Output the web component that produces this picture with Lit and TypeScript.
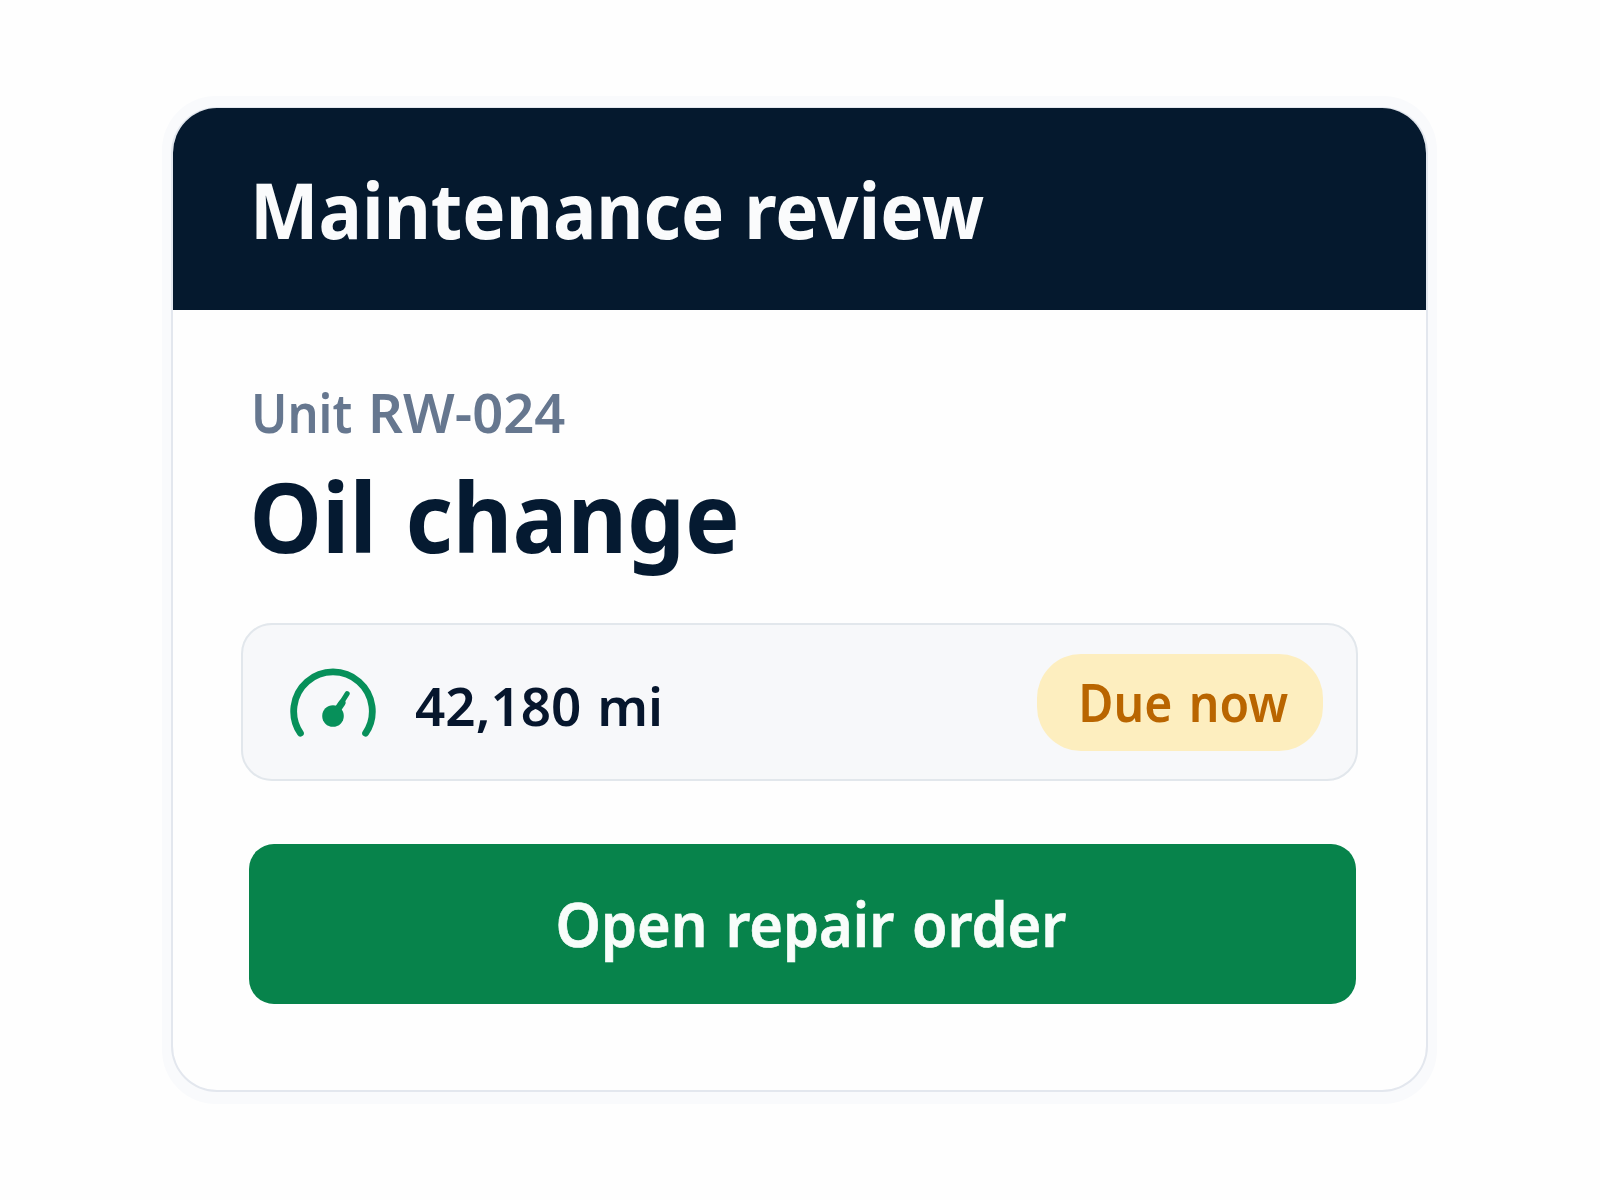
import { LitElement, html, css } from "lit";
import { customElement, property } from "lit/decorators.js";

@customElement("gauge-icon")
class GaugeIcon extends LitElement {
  static styles = css`
    :host { display: block; width: 88px; height: 72px; flex: none; }
    svg { display: block; width: 100%; height: 100%; }
  `;

  render() {
    return html`
      <svg viewBox="0 0 88 72" fill="none" stroke="#07905a" stroke-linecap="round" aria-hidden="true">
        <path d="M11.4 66.2A39.3 39.3 0 1 1 76.6 66.2" stroke-width="6.8" />
        <path d="M44 49L58.2 26.7" stroke-width="5" />
        <path d="M44 49L53 36" stroke-width="7" />
        <circle cx="44" cy="49" r="10.8" fill="#07905a" stroke="none" />
      </svg>
    `;
  }
}

@customElement("maintenance-card")
class MaintenanceCard extends LitElement {
  @property() heading = "";
  @property() unit = "";
  @property() service = "";
  @property() mileage = "";
  @property() status = "";
  @property() action = "";

  static styles = css`
    :host { display: block; font-family: "Noto Sans", "Open Sans", sans-serif; }
    .halo {
      box-sizing: border-box;
      width: 1275px;
      height: 1008px;
      padding: 11px 9px 12px;
      border-radius: 54px;
      background: #f9fafc;
    }
    .card {
      box-sizing: border-box;
      height: 985px;
      border: 2px solid #e3e7ee;
      border-top: 1px solid #e3e7ee;
      border-radius: 46px;
      background: #fefefe;
      overflow: hidden;
    }
    h1, h2, p { margin: 0; white-space: nowrap; }
    .header {
      display: flex;
      align-items: center;
      box-sizing: border-box;
      height: 202px;
      padding: 1px 0 0 76.5px;
      background: #05192e;
    }
    h1 {
      font-size: 76.5px;
      line-height: 1;
      font-weight: 700;
      word-spacing: 1px;
      color: #fafbfc;
      transform: scaleX(0.949);
      transform-origin: left;
    }
    .body { padding: 71px 68px 0 67.5px; }
    .unit {
      display: flex;
      gap: 9.5px;
      padding-left: 10px;
      font-size: 53.5px;
      line-height: 64px;
      font-weight: 600;
      color: #66778f;
    }
    .unit-label { transform: scaleX(0.912); transform-origin: left; }
    .unit-code { transform: scaleX(1.015); transform-origin: right; }
    h2 {
      margin-top: 15px;
      padding-left: 8.5px;
      font-size: 97px;
      line-height: 110px;
      font-weight: 700;
      word-spacing: 5px;
      color: #051a31;
      transform: scaleX(0.946);
      transform-origin: 8.5px 50%;
    }
    .reading {
      display: flex;
      align-items: center;
      box-sizing: border-box;
      height: 158px;
      margin-top: 53px;
      padding: 0 33px 0 46.5px;
      border: 2px solid #e2e7ec;
      border-radius: 31px;
      background: #f7f8fa;
    }
    gauge-icon { margin-top: 2px; }
    .mileage {
      margin-left: 38px;
      padding-top: 7.5px;
      font-size: 53px;
      line-height: 64px;
      font-weight: 600;
      word-spacing: 2px;
      color: #06162d;
    }
    .status {
      display: grid;
      place-items: center;
      box-sizing: border-box;
      width: 286px;
      height: 97px;
      margin-left: auto;
      padding: 2px 0 0 6px;
      border-radius: 44px;
      background: #fdeebf;
      font-size: 51.5px;
      line-height: 1;
      font-weight: 600;
      white-space: nowrap;
      word-spacing: 4px;
      color: #b96500;
    }
    .status-text { transform: scaleX(0.935); }
    .action {
      display: flex;
      align-items: center;
      justify-content: center;
      box-sizing: border-box;
      width: 1107px;
      height: 160px;
      margin: 63px 0 0 8px;
      padding: 0 0 0 17px;
      border: 0;
      border-radius: 25px;
      background: #07834b;
      font-family: inherit;
      font-size: 60.5px;
      line-height: 1;
      font-weight: 600;
      word-spacing: 3px;
      color: #f8fdfa;
      -webkit-text-stroke: 0.7px #f8fdfa;
    }
    .action-text { transform: scaleX(0.953); }
  `;

  render() {
    const [label, code] = this.unit.split(" ");
    return html`
      <div class="halo">
        <article class="card">
          <header class="header"><h1>${this.heading}</h1></header>
          <div class="body">
            <p class="unit"><span class="unit-label">${label}</span> <span class="unit-code">${code}</span></p>
            <h2>${this.service}</h2>
            <div class="reading">
              <gauge-icon></gauge-icon>
              <p class="mileage">${this.mileage}</p>
              <span class="status"><span class="status-text">${this.status}</span></span>
            </div>
            <button class="action"><span class="action-text">${this.action}</span></button>
          </div>
        </article>
      </div>
    `;
  }
}

@customElement("app-root")
class AppRoot extends LitElement {
  static styles = css`
    :host {
      display: block;
      box-sizing: border-box;
      width: 1600px;
      height: 1200px;
      padding: 96px 0 0 162px;
      background: #fefefe;
    }
  `;

  render() {
    return html`
      <maintenance-card
        heading="Maintenance review"
        unit="Unit RW-024"
        service="Oil change"
        mileage="42,180 mi"
        status="Due now"
        action="Open repair order"
      ></maintenance-card>
    `;
  }
}
